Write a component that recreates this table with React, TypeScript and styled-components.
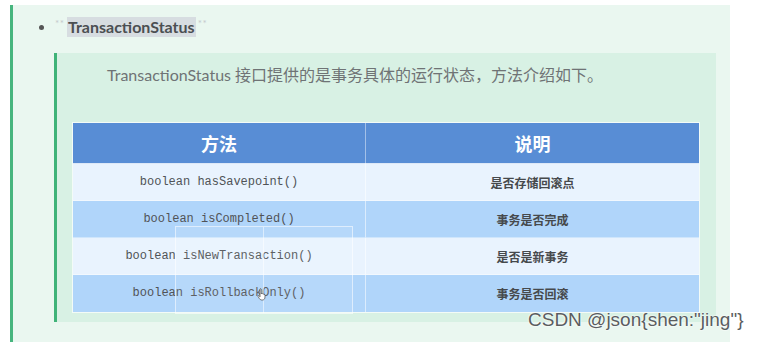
import * as React from "react"
import styled, { createGlobalStyle } from "styled-components"

const Global = createGlobalStyle`
  html, body {
    margin: 0;
    padding: 0;
    background: #ffffff;
    overflow: hidden;
  }
  body {
    font-family: "Lato", "Noto Sans CJK SC", sans-serif;
  }
`

const Page = styled.div`
  width: 760px;
  height: 342px;
  padding: 5px 0 0 10px;
  box-sizing: border-box;
  position: relative;
`

const Note = styled.div`
  width: 720px;
  height: 337px;
  box-sizing: border-box;
  background: #eaf7f0;
  border-left: 3px solid #47b57e;
  padding: 10px 0 0 26px;
`

const Item = styled.div`
  display: flex;
  align-items: center;
  height: 24px;
`

const Bullet = styled.span`
  width: 5px;
  height: 5px;
  border-radius: 50%;
  background: #555;
  margin-right: 11px;
`

const Stars = styled.span`
  color: #c4c9cc;
  font-size: 10px;
  letter-spacing: 0.5px;
  align-self: flex-start;
  margin-top: 2px;
  width: 12px;
`

const Mark = styled.span`
  background: #d7dde1;
  color: #4b4f52;
  font-weight: 700;
  font-size: 16px;
  padding: 0 1px 1px 1px;
  line-height: 19px;
  margin-right: 2px;
`

const Quote = styled.div`
  margin: 14px 0 0 15px;
  width: 662px;
  height: 269px;
  box-sizing: border-box;
  background: #d8f1e4;
  border-left: 3px solid #3fb378;
  padding: 12px 0 0 16px;
  display: flex;
  flex-direction: column;
`

const Lead = styled.p`
  margin: 0 0 0 34px;
  height: 20px;
  line-height: 20px;
  font-size: 16px;
  color: #6f7375;
  font-family: "Lato", "Noto Sans CJK SC", sans-serif;
`

const TableWrap = styled.div`
  position: relative;
  margin-top: 38px;
  width: 625px;
`

const Table = styled.table`
  width: 625px;
  border-collapse: collapse;
  outline: 1px solid rgba(255, 255, 255, 0.7);
  table-layout: fixed;
`

const Head = styled.th<{ w: number }>`
  width: ${p => p.w}px;
  height: 40px;
  background: #588dd5;
  color: #ffffff;
  font-size: 18px;
  font-weight: 700;
  font-family: "Noto Sans CJK SC", sans-serif;
  text-align: center;
  padding: 0;
  border-right: 1px solid rgba(255, 255, 255, 0.45);
  border-bottom: 1px solid rgba(255, 255, 255, 0.8);
  &:last-child {
    border-right: none;
  }
`

const Row = styled.tr<{ dark: boolean }>`
  height: 37px;
  background: ${p => (p.dark ? "#b0d5fa" : "#e9f3fe")};
`

const Code = styled.td`
  text-align: center;
  font-family: "Liberation Mono", monospace;
  font-size: 12px;
  color: #505357;
  padding: 0;
  border-right: 1px solid rgba(255, 255, 255, 0.55);
  border-top: 1px solid rgba(255, 255, 255, 0.4);
`

const Desc = styled.td`
  text-align: center;
  font-family: "Noto Sans CJK SC", sans-serif;
  font-size: 12px;
  font-weight: 700;
  color: #46494c;
  padding: 0;
  border-top: 1px solid rgba(255, 255, 255, 0.4);
`

const Selection = styled.div`
  position: absolute;
  left: 102px;
  top: 103px;
  width: 178px;
  height: 88px;
  border: 1px solid rgba(255, 255, 255, 0.55);
  background: rgba(255, 255, 255, 0.08);
  box-sizing: border-box;
  pointer-events: none;
`

const SelectionSplit = styled.div`
  position: absolute;
  left: 87px;
  top: 0;
  bottom: 0;
  border-left: 1px solid rgba(255, 255, 255, 0.5);
`

const Cursor = styled.svg`
  position: absolute;
  left: 184px;
  top: 165px;
`

const Watermark = styled.div`
  position: absolute;
  left: 528px;
  top: 309px;
  font-family: "Liberation Sans", Arial, sans-serif;
  font-size: 19px;
  color: #5a5d60;
  text-shadow: 0 0 2px #ffffff, 0 0 2px #ffffff;
  white-space: nowrap;
`

const rows = [
  { code: "boolean hasSavepoint()", desc: "是否存储回滚点" },
  { code: "boolean isCompleted()", desc: "事务是否完成" },
  { code: "boolean isNewTransaction()", desc: "是否是新事务" },
  { code: "boolean isRollbackOnly()", desc: "事务是否回滚" },
]

export default function App() {
  return (
    <Page>
      <Global />
      <Note>
        <Item>
          <Bullet />
          <Stars>**</Stars>
          <Mark>TransactionStatus</Mark>
          <Stars>**</Stars>
        </Item>
        <Quote>
          <Lead>TransactionStatus 接口提供的是事务具体的运行状态，方法介绍如下。</Lead>
          <TableWrap>
            <Table>
              <thead>
                <tr>
                  <Head w={292}>方法</Head>
                  <Head w={333}>说明</Head>
                </tr>
              </thead>
              <tbody>
                {rows.map((r, i) => (
                  <Row key={r.code} dark={i % 2 === 1}>
                    <Code>{r.code}</Code>
                    <Desc>{r.desc}</Desc>
                  </Row>
                ))}
              </tbody>
            </Table>
            <Selection>
              <SelectionSplit />
            </Selection>
            <Cursor width="10" height="13" viewBox="0 0 10 13">
              <path
                d="M3 1.2c0-.7 1.2-.7 1.2 0V6l.4-.6c.5-.3 1 0 1.1.3l.2.4c.5-.3 1 0 1.1.4.5-.2 1 .1 1 .6V9c0 1.8-1 3-2.6 3H4.6C3.6 12 3 11.4 2.4 10.6L1 8.4c-.4-.6.4-1.2.9-.7L3 8.8Z"
                fill="#ffffff"
                stroke="#555"
                strokeWidth="0.8"
              />
            </Cursor>
          </TableWrap>
        </Quote>
      </Note>
      <Watermark>CSDN @json{'{'}shen:"jing"{'}'}</Watermark>
    </Page>
  )
}
